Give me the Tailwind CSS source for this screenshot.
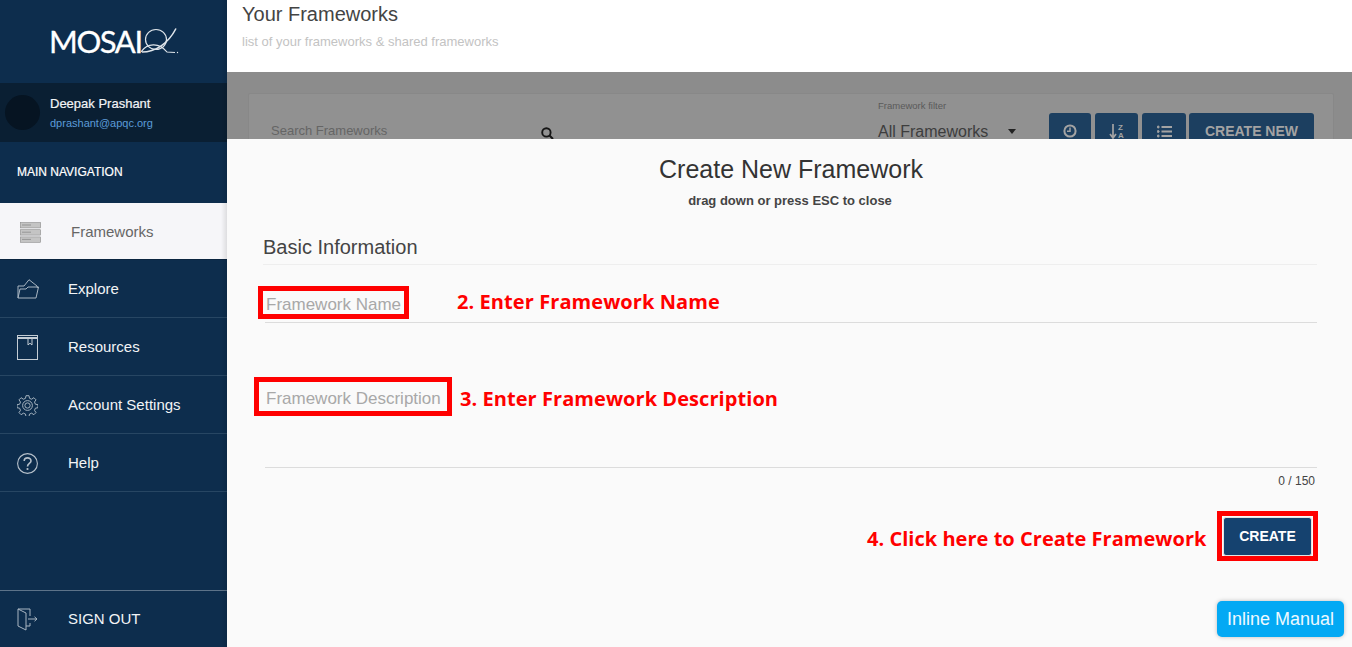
<!DOCTYPE html>
<html lang="en">
<head>
<meta charset="UTF-8">
<title>Your Frameworks</title>
<script src="https://cdn.jsdelivr.net/npm/@tailwindcss/browser@4"></script>
</head>
<body class="h-[647px] w-[1352px] overflow-hidden bg-white font-['Liberation_Sans',Arial,sans-serif]">
<div class="flex h-[647px]">
  <!-- sidebar -->
  <aside class="relative z-10 flex h-full w-[227px] shrink-0 flex-col bg-[#0d2d4d] text-white">
    <div class="flex h-[83px] items-center pl-[49px]">
      <span class="font-['Lato',sans-serif] text-[31px] leading-none font-normal tracking-[-1.4px] text-white [-webkit-text-stroke:0.3px_white]">MOSAI</span>
      <svg class="ml-[-1px] mt-[-2px]" width="38" height="26" viewBox="0 0 38 26" fill="none" stroke="#dfe5ea" stroke-width="1.2">
        <ellipse cx="15" cy="11.5" rx="10.5" ry="10" />
        <path d="M1 24 C 14 24 27 16 35 0.5" stroke-width="1.6" />
        <path d="M0 24 C 6 15 18 14 26 24 L34 24.5" />
        <circle cx="36.5" cy="24.5" r="0.7" fill="#dfe5ea" stroke="none" />
      </svg>
    </div>
    <div class="flex h-[59px] items-center bg-[#0a1f33] pl-[5px]">
      <div class="h-[35px] w-[35px] rounded-full bg-[#061422]"></div>
      <div class="ml-[10px]">
        <div class="text-[13px] leading-[16px] font-normal text-[#f2f4f6] [-webkit-text-stroke:0.2px_#f2f4f6]">Deepak Prashant</div>
        <div class="mt-[4px] text-[11px] leading-[14px] text-[#5b9bd8]">dprashant@apqc.org</div>
      </div>
    </div>
    <div class="flex h-[61px] items-center pb-[2px] pl-[17px] text-[12px] font-normal text-white [-webkit-text-stroke:0.2px_white]">MAIN NAVIGATION</div>

    <a class="flex h-[57px] items-center border-b border-[#0a2540] bg-[#f6f6f9] pt-[2px] pl-[20px] text-[15px] text-[#666]">
      <svg width="21" height="21" viewBox="0 0 21 21" fill="#c4c4c4" stroke="#8e8e8e" stroke-width="0.6">
        <rect x="0.3" y="0.5" width="20.4" height="5.4" />
        <rect x="0.3" y="7.7" width="20.4" height="5.4" />
        <rect x="0.3" y="14.9" width="20.4" height="5.4" />
        <path d="M2 3h9M2 10.2h9M2 17.4h9" stroke="#777" fill="none" />
      </svg>
      <span class="ml-[30px]">Frameworks</span>
    </a>
    <a class="flex h-[58px] items-center border-b border-[#274663] pt-[1px] pl-[17px] text-[15px] text-[#f2f4f6]">
      <svg width="22" height="20" viewBox="0 0 22 20" fill="none" stroke="#a9b6c2" stroke-width="1">
        <path d="M1 19 L1 7 L7 7 L12 0.7 L20 7 L20.5 9" />
        <path d="M1 19 L3 10 L9 10 L11 8 L21.5 8 L19 19 Z" />
      </svg>
      <span class="ml-[29px]">Explore</span>
    </a>
    <a class="flex h-[58px] items-center border-b border-[#274663] pt-[1px] pl-[17px] text-[15px] text-[#f2f4f6]">
      <svg width="21" height="25" viewBox="0 0 21 25" fill="none" stroke="#c3ccd4" stroke-width="1">
        <rect x="0.5" y="0.5" width="20" height="24" />
        <path d="M0.5 3h20" stroke-width="2" />
        <path d="M11 3 V10 L13 8.2 L15 10 V3" />
      </svg>
      <span class="ml-[30px]">Resources</span>
    </a>
    <a class="flex h-[58px] items-center border-b border-[#274663] pt-[1px] pl-[17px] text-[15px] text-[#f2f4f6]">
      <svg width="21" height="21" viewBox="0 0 24 24" fill="none" stroke="#a9b6c2" stroke-width="1.1">
        <path d="M10.3 1.5h3.4l.6 3 2.4 1 2.6-1.7 2.4 2.4-1.7 2.6 1 2.4 3 .6v3.4l-3 .6-1 2.4 1.7 2.6-2.4 2.4-2.6-1.7-2.4 1-.6 3h-3.4l-.6-3-2.4-1-2.6 1.7-2.4-2.4 1.7-2.6-1-2.4-3-.6v-3.4l3-.6 1-2.4-1.7-2.6 2.4-2.4 2.6 1.7 2.4-1z" transform="translate(0 -.7)" />
        <circle cx="12" cy="12" r="5.6" />
        <circle cx="12" cy="12" r="3" />
      </svg>
      <span class="ml-[30px]">Account Settings</span>
    </a>
    <a class="flex h-[58px] items-center border-b border-[#274663] pt-[1px] pl-[17px] text-[15px] text-[#f2f4f6]">
      <svg width="21" height="21" viewBox="0 0 21 21" fill="none" stroke="#b6c0ca" stroke-width="1.1">
        <circle cx="10.5" cy="10.5" r="9.9" />
        <path d="M7.2 8 C7.2 3.8 14 3.8 14 8 C14 10.5 10.5 10.5 10.5 13.5" stroke-width="1.6" />
        <circle cx="10.5" cy="16" r="1.1" fill="#b6c0ca" stroke="none" />
      </svg>
      <span class="ml-[30px]">Help</span>
    </a>

    <a class="mt-auto flex h-[57px] items-center border-t border-[#5d7389] pl-[17px] text-[15px] text-[#f2f4f6]">
      <svg width="21" height="23" viewBox="0 0 21 23" fill="none" stroke="#a9b6c2" stroke-width="1">
        <path d="M13 8 V1 H1 V18 L9 22 V5 L1 1" />
        <path d="M9 18 H13 V15" />
        <path d="M11 11 H20 M17.5 8.8 L20 11 L17.5 13.2" />
      </svg>
      <span class="ml-[30px]">SIGN OUT</span>
    </a>
    <div class="absolute top-0 right-0 h-full w-[6px] bg-gradient-to-r from-transparent to-black/10"></div>
  </aside>

  <!-- main -->
  <main class="relative flex min-w-0 flex-1 flex-col">
    <header class="h-[72px] bg-white pl-[15px]">
      <h1 class="pt-[3px] text-[20px] leading-[23px] font-normal text-[#444]">Your Frameworks</h1>
      <p class="mt-[8px] text-[13px] leading-[15px] text-[#c3c3c3]">list of your frameworks &amp; shared frameworks</p>
    </header>

    <!-- dimmed page behind the sheet -->
    <div class="flex-1 bg-[#8c8c8c] pt-[21px] pr-[18px] pl-[21px]">
      <div class="flex h-[100px] items-start rounded-[2px] border border-[#888] bg-[#919191]">
        <div class="mt-[27px] ml-[22px] flex w-[283px] items-center justify-between">
          <span class="text-[13px] text-[#656565]">Search Frameworks</span>
          <svg class="mt-[5px]" width="13" height="13" viewBox="0 0 13 13" fill="none" stroke="#151515" stroke-width="1.9"><circle cx="5.4" cy="5.4" r="4.2" /><path d="M8.5 8.5 L12 12" /></svg>
        </div>
        <div class="ml-[324px] w-[143px] pt-[6px]">
          <div class="text-[9.5px] leading-[12px] text-[#5a5a5a]">Framework filter</div>
          <div class="mt-[10px] flex items-center justify-between pr-[5px] text-[16px] leading-[19px] text-[#3d3d3d]">
            <span>All Frameworks</span>
            <span class="h-0 w-0 border-x-[4px] border-t-[5px] border-x-transparent border-t-[#222]"></span>
          </div>
        </div>
        <div class="mt-[19px] ml-[28px] flex gap-[4px] text-[#a3a3a3]">
          <div class="flex h-[36px] w-[42px] justify-center rounded-[3px] bg-[#1c3f60] pt-[11px]">
            <svg width="14" height="14" viewBox="0 0 14 14" fill="none" stroke="#a3a3a3" stroke-width="2"><circle cx="7" cy="7" r="5.6" /><path d="M7 3.5 V7.3 H4" stroke-width="1.5" /></svg>
          </div>
          <div class="flex h-[36px] w-[43px] justify-center gap-[1px] rounded-[3px] bg-[#1c3f60] pt-[11px]">
            <svg width="8" height="15" viewBox="0 0 8 15" fill="none" stroke="#a3a3a3" stroke-width="1.7"><path d="M4 0 V13 M1 10 L4 14 L7 10" /></svg>
            <span class="text-[8px] leading-[8px] font-bold">Z<br>A</span>
          </div>
          <div class="flex h-[36px] w-[44px] justify-center rounded-[3px] bg-[#1c3f60] pt-[12px]">
            <svg width="15" height="13" viewBox="0 0 15 13" stroke="#a3a3a3" fill="#a3a3a3"><path d="M4.5 2 H15 M4.5 6.5 H15 M4.5 11 H15" stroke-width="1.8" /><circle cx="1.2" cy="2" r="1" /><circle cx="1.2" cy="6.5" r="1" /><circle cx="1.2" cy="11" r="1" /></svg>
          </div>
          <div class="ml-[-1px] flex h-[36px] w-[125px] justify-center rounded-[3px] bg-[#1c3f60] pt-[10px] text-[14px] leading-[16px] font-bold">CREATE NEW</div>
        </div>
      </div>
    </div>

    <!-- bottom sheet -->
    <section class="absolute inset-x-0 top-[139px] bottom-0 bg-[#fafafa] pr-[35px] pl-[36px]">
      <h2 class="pt-[16px] pl-[2px] text-center text-[25px] leading-[29px] font-normal text-[#333]">Create New Framework</h2>
      <p class="mt-[10px] text-center text-[13px] leading-[14px] font-bold text-[#444]">drag down or press ESC to close</p>
      <h3 class="mt-[28px] border-b border-[#eeeeee] pb-[5px] text-[20px] leading-[23px] font-normal text-[#444]">Basic Information</h3>
      <div class="mt-[30px] ml-[2px] border-b border-[#dcdcdc] pb-[7px] pl-[1px] text-[17px] leading-[20px] text-[#a8a8a8]">Framework Name</div>
      <div class="mt-[66px] ml-[2px] h-[79px] border-b border-[#dcdcdc] pl-[1px] text-[17px] leading-[20px] text-[#a8a8a8]">Framework Description</div>
      <div class="mt-[6px] pr-[2px] text-right text-[12px] leading-[14px] text-[#444]">0 / 150</div>
      <div class="mt-[29px] flex justify-end pr-[5px]">
        <button class="flex h-[39px] w-[89px] items-center justify-center rounded-[3px] border border-[#e3e3e3] bg-[#15426f] text-[14px] font-bold text-white">CREATE</button>
      </div>
    </section>

    <!-- red annotations drawn over the screenshot -->
    <div class="absolute top-[286px] left-[31px] h-[33px] w-[151px] border-[5px] border-[#ff0000]"></div>
    <div class="absolute top-[377px] left-[27px] h-[39px] w-[198px] border-[5px] border-[#ff0000]"></div>
    <div class="absolute top-[511px] left-[990px] h-[50px] w-[101px] border-[5px] border-[#ff0000]"></div>
    <div class="absolute top-[288px] left-[230px] font-['Open_Sans',sans-serif] text-[20px] leading-[28px] tracking-[0.08px] font-bold text-[#ff0000]">2. Enter Framework Name</div>
    <div class="absolute top-[385px] left-[233px] font-['Open_Sans',sans-serif] text-[20px] leading-[28px] tracking-[0.06px] font-bold text-[#ff0000]">3. Enter Framework Description</div>
    <div class="absolute top-[525px] left-[640px] font-['Open_Sans',sans-serif] text-[20px] leading-[28px] tracking-[0.03px] font-bold text-[#ff0000]">4. Click here to Create Framework</div>

    <button class="absolute top-[601px] left-[990px] h-[36px] w-[127px] rounded-[5px] bg-[#03a9f4] text-[18px] text-[#eef9ff] shadow-[0_0_4px_rgba(0,0,0,0.25)]">Inline Manual</button>
  </main>
</div>
</body>
</html>
